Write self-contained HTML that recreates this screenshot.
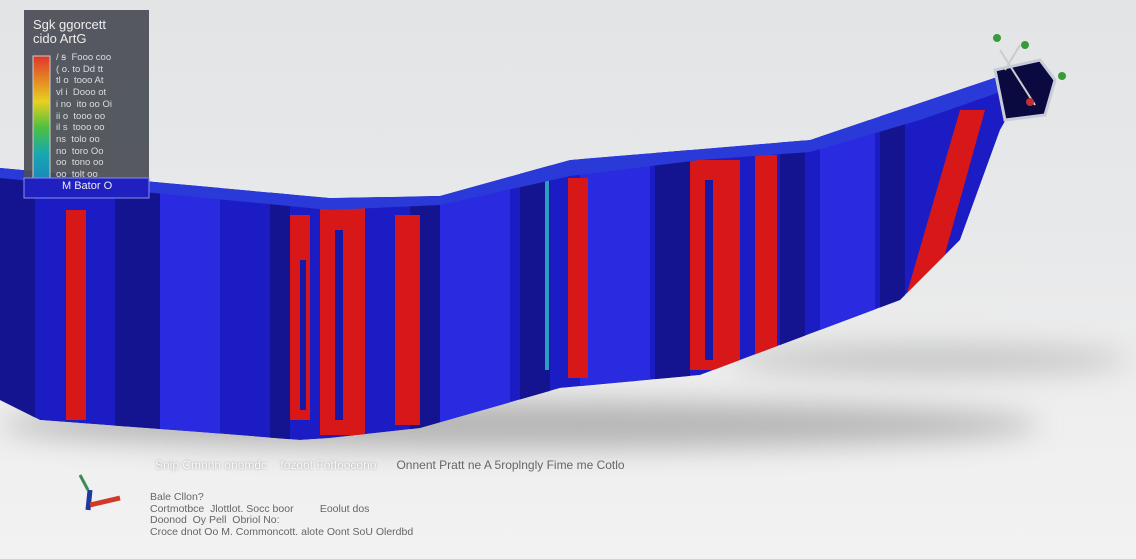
<!DOCTYPE html>
<html><head><style>
html,body{margin:0;padding:0;width:1136px;height:559px;overflow:hidden}
body{background:linear-gradient(#e2e4e6 0%,#e8e9ea 45%,#eeeeee 70%,#f2f2f2 100%);font-family:"Liberation Sans",sans-serif;position:relative}
.t{position:absolute;color:#555;font-size:11px;white-space:nowrap}
</style></head><body>
<svg width="1136" height="559" style="position:absolute;left:0;top:0">
<defs>
<linearGradient id="lg" x1="0" y1="0" x2="0" y2="1"><stop offset="0" stop-color="#e0362a"/><stop offset=".35" stop-color="#e8d020"/><stop offset=".55" stop-color="#4cc040"/><stop offset=".75" stop-color="#18a8b0"/><stop offset="1" stop-color="#1a80c0"/></linearGradient>
<filter id="b" x="-50%" y="-300%" width="200%" height="700%"><feGaussianBlur stdDeviation="14"/></filter>
<clipPath id="cp"><polygon points="0,168 330,198 440,196 570,160 810,140 1000,76 1040,60 1000,130 960,240 900,300 780,345 700,375 560,388 420,428 330,438 300,440 200,432 40,420 0,400"/></clipPath>
</defs>
<ellipse cx="520" cy="425" rx="520" ry="24" fill="#909090" opacity=".6" filter="url(#b)"/>
<ellipse cx="930" cy="360" rx="200" ry="16" fill="#a0a0a0" opacity=".5" filter="url(#b)"/>
<g clip-path="url(#cp)">
<polygon points="0,168 330,198 440,196 570,160 810,140 1000,76 1040,60 1000,130 960,240 900,300 780,345 700,375 560,388 420,428 330,438 300,440 200,432 40,420 0,400" fill="#1c1cc4"/>
<g fill="#141490">
<rect x="0" y="160" width="35" height="260"/>
<rect x="115" y="160" width="45" height="280"/>
<rect x="270" y="160" width="20" height="280"/>
<rect x="410" y="160" width="30" height="280"/>
<rect x="520" y="150" width="30" height="250"/>
<rect x="655" y="140" width="35" height="250"/>
<rect x="780" y="130" width="25" height="230"/>
<rect x="880" y="100" width="25" height="230"/>
</g>
<g fill="#2a2ae0">
<rect x="160" y="160" width="60" height="280"/>
<rect x="440" y="160" width="70" height="280"/>
<rect x="580" y="150" width="70" height="250"/>
<rect x="820" y="120" width="55" height="230"/>
</g>
<g fill="#d81818">
<rect x="66" y="210" width="20" height="210"/>
<rect x="290" y="215" width="20" height="205"/>
<rect x="320" y="205" width="45" height="230"/>
<rect x="395" y="215" width="25" height="210"/>
<rect x="568" y="178" width="20" height="200"/>
<rect x="690" y="160" width="50" height="210"/>
<rect x="755" y="155" width="22" height="205"/>
<polygon points="905,300 960,110 985,110 935,290"/>
</g>
<g fill="#1818a8">
<rect x="335" y="230" width="8" height="190"/>
<rect x="705" y="180" width="8" height="180"/>
<rect x="300" y="260" width="6" height="150"/>
</g>
<rect x="545" y="180" width="4" height="190" fill="#2aa0c0"/>
<polygon points="0,168 330,198 440,196 570,160 810,140 1000,76 1040,60 1030,72 1000,92 920,120 810,152 700,160 570,176 440,205 330,210 0,178" fill="#2a3ad8"/>
</g>
<polygon points="995,70 1040,60 1055,80 1045,115 1005,120" fill="#0a0a40" stroke="#c8ccd8" stroke-width="3"/>
<line x1="1000" y1="50" x2="1035" y2="105" stroke="#ccc" stroke-width="2"/>
<line x1="1020" y1="45" x2="1005" y2="70" stroke="#ccc" stroke-width="2"/>
<circle cx="997" cy="38" r="4" fill="#3a9a3a"/><circle cx="1025" cy="45" r="4" fill="#3a9a3a"/><circle cx="1062" cy="76" r="4" fill="#3a9a3a"/><circle cx="1030" cy="102" r="4" fill="#c03030"/>
<rect x="24" y="10" width="125" height="188" fill="#4a4e55" opacity=".93"/>
<rect x="33" y="56" width="17" height="130" fill="url(#lg)" stroke="#ccc" stroke-width="1"/>
<rect x="24" y="178" width="125" height="20" fill="#2020c0" stroke="#8890ee"/>
<line x1="80" y1="475" x2="88" y2="490" stroke="#3a8a5a" stroke-width="3"/>
<line x1="90" y1="490" x2="88" y2="510" stroke="#1a3aa0" stroke-width="5"/>
<line x1="90" y1="505" x2="120" y2="498" stroke="#d03a2a" stroke-width="5"/>
</svg>
<div class="t" style="left:33px;top:18px;color:#eee;font-size:13px;line-height:14px">Sgk ggorcett<br>cido ArtG</div>
<div style="position:absolute;left:56px;top:52px;color:#ddd;font-size:9.5px;line-height:11.7px;white-space:pre;font-family:'Liberation Sans',sans-serif">/ ꞩ  Fooo coo
( o. to Dd tt
tl o  tooo At
vl i  Dooo ot
i no  ito oo Oi
ii o  tooo oo
il s  tooo oo
ns  tolo oo
no  toro Oo
oo  tono oo
oo  tolt oo</div>
<div class="t" style="left:62px;top:180px;color:#eee;font-size:11px">M  Bator O</div>
<div class="t" style="left:155px;top:458px;color:#fafafa;font-size:12px;text-shadow:0 0 2px #999">Snip Cmnnn onomdc &nbsp;&nbsp; fozoot Fotfoocono &nbsp;&nbsp;&nbsp;&nbsp; <span style="color:#666;text-shadow:none">Onnent Pratt ne A 5roplngly Fime me Cotlo</span></div>
<div class="t" style="left:150px;top:492px;font-size:10.5px;line-height:11.5px;color:#666">Bale Cllon?<br>Cortmotbce &nbsp;Jlottlot. Socc boor &nbsp;&nbsp;&nbsp;&nbsp;&nbsp;&nbsp;&nbsp; Eoolut dos<br>Doonod &nbsp;Oy Pell &nbsp;Obriol No:<br>Croce dnot Oo M. Commoncott. alote Oont SoU Olerdbd</div>
</body></html>
